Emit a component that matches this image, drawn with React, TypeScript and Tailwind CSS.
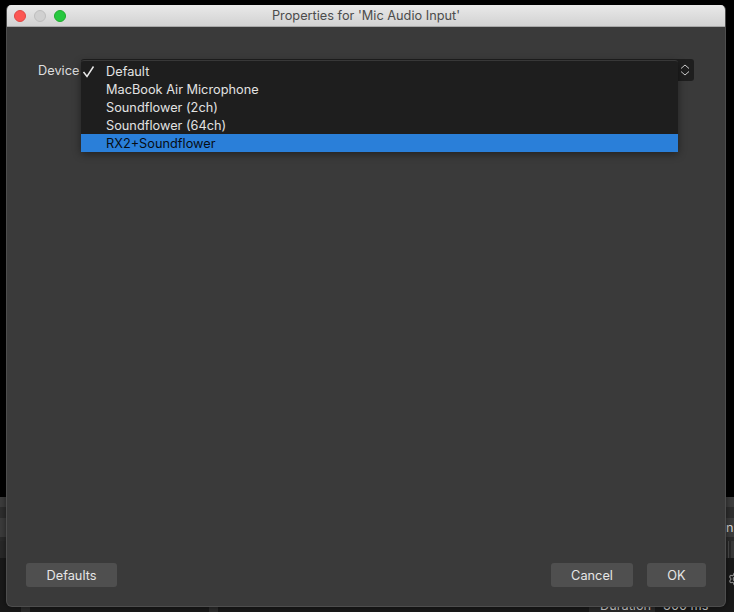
import { Settings } from 'lucide-react';

const FONT = "font-['Inter','Liberation_Sans',sans-serif]";

const ITEMS = ['Default', 'MacBook Air Microphone', 'Soundflower (2ch)', 'Soundflower (64ch)', 'RX2+Soundflower'];

function DialogButton({ label, width }: { label: string; width: string }) {
  return (
    <button className={`${width} h-6 pt-px rounded-[3px] bg-[#4f4f4f] text-[12.75px] leading-[22px] text-[#e6e6e6] text-center`}>
      {label}
    </button>
  );
}

function Backdrop() {
  return (
    <div className="absolute inset-0 flex flex-col bg-black">
      <div className="h-[497px]" />
      <div className="h-[10px] bg-[#3d3d3d]" />
      <div className="h-[11px] bg-[#2e2e2e]" />
      <div className="h-[19px] bg-[#3c3c3c]" />
      <div className="h-[4px] bg-[#2b2b2b]" />
      <div className="h-[17px] bg-[#282828]" />
      <div className="flex-1 bg-[#191919]" />
    </div>
  );
}

export default function App() {
  return (
    <div className={`relative w-[734px] h-[612px] overflow-hidden ${FONT}`}>
      <Backdrop />

      {/* bits of the main window under the dialog */}
      <div className="absolute left-[21px] top-[607px] w-[9px] h-[5px] bg-[#2c2c2c]" />
      <div className="absolute left-[209px] top-[607px] w-[9px] h-[5px] bg-[#2c2c2c]" />
      <div className="absolute left-[589px] top-[600px] w-[66px] h-[12px] bg-[#2a2a2a]" />
      <span className="absolute left-[600px] top-[599px] text-[12.75px] leading-[14px] text-[#c8c8c8]">Duration</span>
      <span className="absolute left-[663px] top-[599px] text-[12.75px] leading-[14px] text-[#c8c8c8]">300 ms</span>
      <span className="absolute left-[726px] top-[520px] w-[8px] overflow-hidden text-[12.75px] leading-[16px] text-[#d4d4d4]">ns</span>
      <div className="absolute left-[728px] top-[541px] w-px h-[17px] bg-[#4a4a4a]" />
      <div className="absolute left-[731px] top-[541px] w-[3px] h-[17px] bg-[#383838]" />
      <Settings className="absolute left-[728px] top-[572px] text-[#8a8a8a]" size={14} />

      <div className="absolute left-[6px] top-[5px] w-[720px] h-[602px] rounded-t-[5px] rounded-b-[6px] overflow-hidden flex flex-col bg-[#3a3a3a] border-b border-x border-[#5a5a5a]/60 shadow-[0_0_6px_rgba(0,0,0,0.5)]">
        <div className="relative h-[22px] shrink-0 -mx-px bg-gradient-to-b from-[#e9e9e9] to-[#d2d2d2] border-b border-[#a8a8a8] flex items-center justify-center">
          <div className="absolute left-[8px] top-[5px] flex gap-[8px]">
            <span className="w-3 h-3 rounded-full bg-[#fc5753] border border-[#df4744]" />
            <span className="w-3 h-3 rounded-full bg-[#d0d0d0] border border-[#bdbdbd]" />
            <span className="w-3 h-3 rounded-full bg-[#27c83f] border border-[#1eab2c]" />
          </div>
          <span className="text-[12.75px] text-[#4c4c4c]">Properties for 'Mic Audio Input'</span>
        </div>

        <div className="relative flex-1 flex flex-col px-[19px] pb-[19px]">
          <div className="flex items-start pt-[32px] pl-[12px]">
            <span className="text-[12.75px] leading-[24px] text-[#dedede] w-[43px] shrink-0">Device</span>
            <div className="w-[613px] h-[22px] rounded-[3px] bg-[#1e1e1e] flex justify-end items-center pr-[4px]">
              <svg width="10" height="16" viewBox="0 0 10 16" fill="none" stroke="#cfcfcf" strokeWidth="1">
                <path d="M1 6.5 L5 3 L9 6.5" />
                <path d="M1 9.5 L5 13 L9 9.5" />
              </svg>
            </div>
          </div>

          <div className="mt-auto flex items-center justify-between">
            <DialogButton label="Defaults" width="w-[91px]" />
            <div className="flex gap-[14px]">
              <DialogButton label="Cancel" width="w-[82px]" />
              <DialogButton label="OK" width="w-[59px]" />
            </div>
          </div>

          {/* open dropdown */}
          <div className="absolute left-[74px] top-[33px] w-[597px] h-[91px] pt-px rounded-t-[3px] bg-[#1e1e1e] border-t border-[#383838] shadow-[0_3px_8px_rgba(0,0,0,0.45)]">
            {ITEMS.map((item, i) => {
              const last = i === ITEMS.length - 1;
              return (
                <div
                  key={item}
                  className={`relative h-[18px] pl-[25px] text-[12.75px] leading-[20px] ${
                    last ? 'bg-[#2a7fd9] text-[#070d14]' : 'text-[#e2e2e2]'
                  }`}
                >
                  {i === 0 && (
                    <svg className="absolute left-[1px] top-[3px]" width="13" height="13" viewBox="0 0 13 13" fill="none" stroke="#e8e8e8" strokeWidth="1.5">
                      <path d="M1.5 7 L5 11.5 L11.5 1.5" />
                    </svg>
                  )}
                  {item}
                </div>
              );
            })}
          </div>
        </div>
      </div>
    </div>
  );
}
